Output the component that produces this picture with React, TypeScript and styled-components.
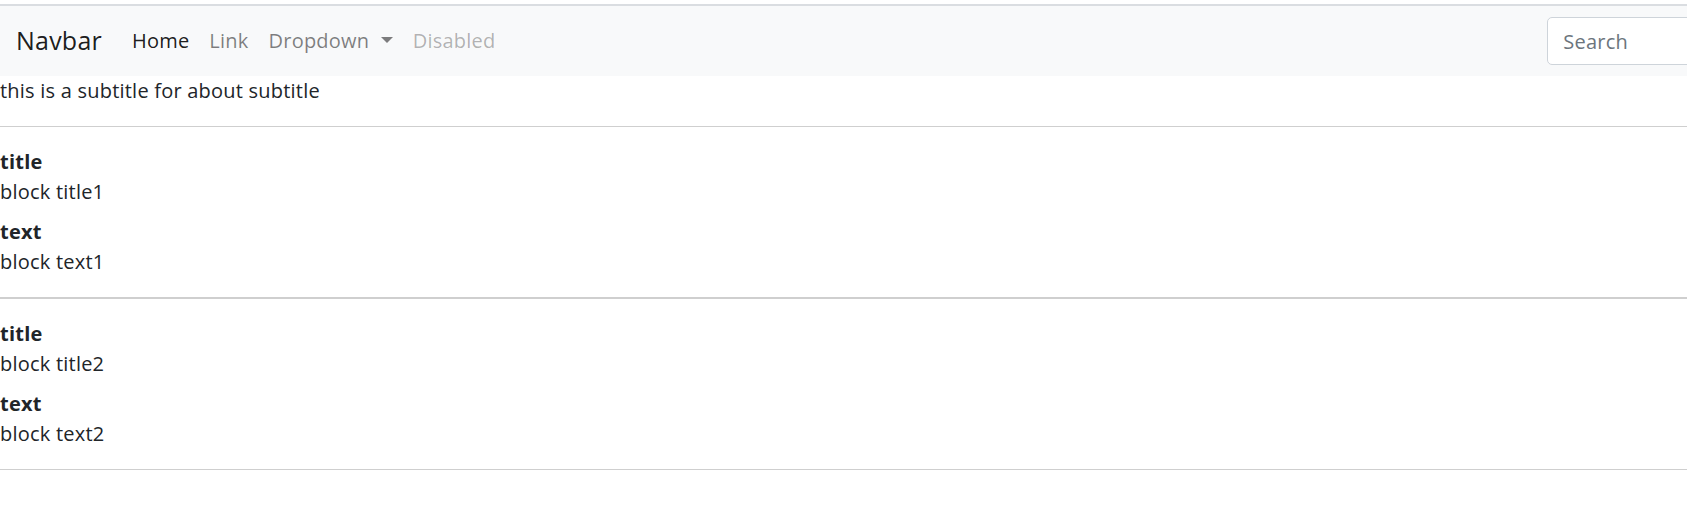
import React from "react";
import styled, { createGlobalStyle } from "styled-components";

const GlobalStyle = createGlobalStyle`
  html, body {
    margin: 0;
    padding: 0;
    overflow: hidden;
    background: #ffffff;
  }
  body {
    font-family: "Open Sans", "Noto Sans", "Liberation Sans", sans-serif;
    font-size: 20px;
    line-height: 1.5;
    letter-spacing: 0.22px;
    color: #212529;
  }
  * { box-sizing: border-box; }
`;

const Page = styled.div`
  width: 1940px;
  padding-top: 4px;
`;

const TopRule = styled.div`
  height: 2px;
  background: #dadde1;
`;

const NavBar = styled.nav`
  display: flex;
  align-items: center;
  height: 70px;
  padding: 0 16px;
  background: #f8f9fa;
`;

const Brand = styled.a`
  font-size: 25px;
  line-height: 37.5px;
  padding: 6px 0;
  margin-right: 20px;
  color: rgba(0, 0, 0, 0.9);
  text-decoration: none;
  white-space: nowrap;
`;

const NavList = styled.ul`
  display: flex;
  align-items: center;
  list-style: none;
  margin: 0 auto 0 0;
  padding: 0;
`;

const NavLink = styled.a<{ $tone: "active" | "normal" | "disabled" }>`
  display: block;
  padding: 10px 10px;
  font-size: 20px;
  line-height: 30px;
  text-decoration: none;
  white-space: nowrap;
  color: ${(p) =>
    p.$tone === "active"
      ? "rgba(0,0,0,0.9)"
      : p.$tone === "disabled"
      ? "rgba(0,0,0,0.3)"
      : "rgba(0,0,0,0.5)"};
`;

const Caret = styled.span`
  display: inline-block;
  margin-left: 0.3em;
  vertical-align: 0.255em;
  border-top: 0.3em solid;
  border-right: 0.3em solid transparent;
  border-left: 0.3em solid transparent;
  border-bottom: 0;
`;

const SearchForm = styled.form`
  display: flex;
  align-items: center;
  gap: 10px;
  margin: 0;
`;

const SearchInput = styled.input`
  width: 270px;
  height: 47.5px;
  padding: 7.5px 15px;
  font-family: inherit;
  font-size: 20px;
  line-height: 30px;
  letter-spacing: inherit;
  color: #495057;
  background: #ffffff;
  border: 1px solid #ced4da;
  border-radius: 5px;
  outline: none;
  &::placeholder {
    color: #6c757d;
  }
`;

const SearchButton = styled.button`
  height: 47.5px;
  padding: 7.5px 15px;
  font-family: inherit;
  font-size: 20px;
  line-height: 30px;
  letter-spacing: inherit;
  color: #28a745;
  background: transparent;
  border: 1px solid #28a745;
  border-radius: 5px;
`;

const Subtitle = styled.p`
  margin: 0;
  line-height: 30px;
`;

const Rule = styled.hr<{ $thick?: boolean }>`
  margin: 20px 0;
  border: 0;
  border-top: ${(p) => (p.$thick ? "2px" : "1px")} solid #cfcfcf;
`;

const Block = styled.dl`
  margin: 0;
`;

const Term = styled.dt`
  font-weight: 700;
  line-height: 30px;
`;

const Desc = styled.dd`
  margin: 0 0 10px 0;
  line-height: 30px;
  &:last-child {
    margin-bottom: 0;
  }
`;

const blocks = [
  { title: "block title1", text: "block text1" },
  { title: "block title2", text: "block text2" },
];

export default function App() {
  return (
    <Page>
      <GlobalStyle />
      <TopRule />
      <NavBar>
        <Brand href="#">Navbar</Brand>
        <NavList>
          <li>
            <NavLink $tone="active" href="#">Home</NavLink>
          </li>
          <li>
            <NavLink $tone="normal" href="#">Link</NavLink>
          </li>
          <li>
            <NavLink $tone="normal" href="#">
              Dropdown <Caret />
            </NavLink>
          </li>
          <li>
            <NavLink $tone="disabled" href="#">Disabled</NavLink>
          </li>
        </NavList>
        <SearchForm onSubmit={(e) => e.preventDefault()}>
          <SearchInput type="search" placeholder="Search" aria-label="Search" />
          <SearchButton type="submit">Search</SearchButton>
        </SearchForm>
      </NavBar>
      <Subtitle>this is a subtitle for about subtitle</Subtitle>
      {blocks.map((b, i) => (
        <React.Fragment key={i}>
          <Rule $thick={i === 1} />
          <Block>
            <Term>title</Term>
            <Desc>{b.title}</Desc>
            <Term>text</Term>
            <Desc>{b.text}</Desc>
          </Block>
        </React.Fragment>
      ))}
      <Rule />
    </Page>
  );
}
